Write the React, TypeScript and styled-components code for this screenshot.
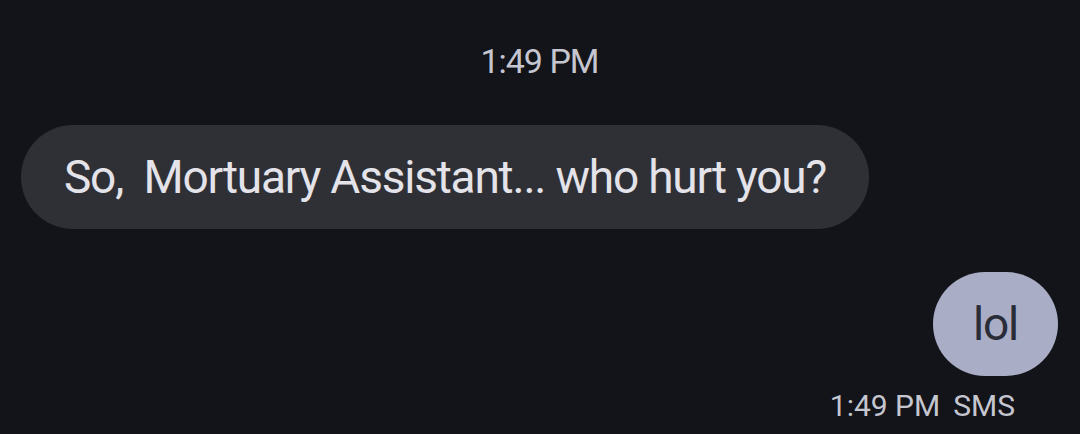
import styled, { createGlobalStyle } from "styled-components";

const GlobalStyle = createGlobalStyle`
    html, body {
        margin: 0;
        padding: 0;
        background-color: #131419;
    }
    body {
        font-family: Roboto, "Noto Sans", "Liberation Sans", sans-serif;
    }
`;

const Thread = styled.div`
    width: 1080px;
    height: 434px;
    box-sizing: border-box;
    padding: 41px 22px 0 21px;
    display: flex;
    flex-direction: column;
    overflow: hidden;
`;

const Timestamp = styled.div`
    text-align: center;
    font-size: 34px;
    line-height: 40px;
    letter-spacing: -1px;
    color: #c5c6d0;
`;

const Row = styled.div<{ $outgoing?: boolean }>`
    display: flex;
    justify-content: ${(p) => (p.$outgoing ? "flex-end" : "flex-start")};
    margin-top: ${(p) => (p.$outgoing ? "43px" : "44px")};
`;

const Bubble = styled.div<{ $outgoing?: boolean }>`
    box-sizing: border-box;
    height: 104px;
    border-radius: 52px;
    padding: 0 ${(p) => (p.$outgoing ? "40px" : "43px")};
    display: flex;
    align-items: center;
    font-size: 46px;
    letter-spacing: -1.2px;
    white-space: pre;
    background-color: ${(p) => (p.$outgoing ? "#a9aec6" : "#2f3036")};
    color: ${(p) => (p.$outgoing ? "#2a2c37" : "#e3e3e9")};
`;

const Status = styled.div`
    display: flex;
    justify-content: flex-end;
    gap: 13px;
    margin-top: 12px;
    padding-right: 43px;
    font-size: 30px;
    line-height: 36px;
    color: #c5c6d0;
`;

export default function App() {
    return (
        <>
            <GlobalStyle />
            <Thread>
                <Timestamp>1:49 PM</Timestamp>
                <Row>
                    <Bubble>So,  Mortuary Assistant... who hurt you?</Bubble>
                </Row>
                <Row $outgoing>
                    <Bubble $outgoing>lol</Bubble>
                </Row>
                <Status>
                    <span>1:49 PM</span>
                    <span>SMS</span>
                </Status>
            </Thread>
        </>
    );
}
